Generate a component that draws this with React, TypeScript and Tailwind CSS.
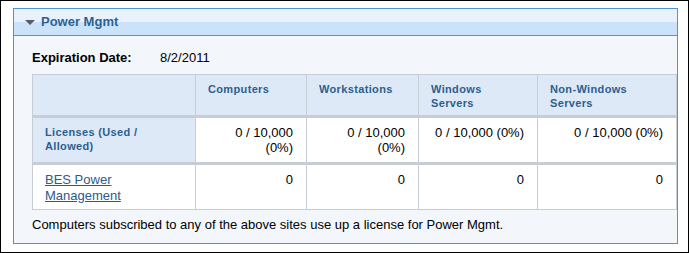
import React from "react";

const COLUMNS = [
  { key: "computers", label: ["Computers"], used: "0 / 10,000 (0%)", count: 0 },
  { key: "workstations", label: ["Workstations"], used: "0 / 10,000 (0%)", count: 0 },
  { key: "winServers", label: ["Windows", "Servers"], used: "0 / 10,000 (0%)", count: 0 },
  { key: "otherServers", label: ["Non-Windows", "Servers"], used: "0 / 10,000 (0%)", count: 0 },
];

const headCell =
  "align-top bg-[#dee9f7] border-r border-b-[3px] border-t border-[#c6cdd4] px-3 pt-[7px] text-[11px] leading-[14px] font-bold tracking-[0.35px] text-[#2c5f8f]";
const numCell =
  "align-top bg-white border-r border-[#c6cdd4] pl-3 pr-[13px] pt-[7px] text-right text-[13px] leading-[15px] text-black";

export default function App() {
  return (
    <div
      className="w-[689px] h-[253px] border border-black bg-white pl-3 pt-[7px]"
      style={{ fontFamily: '"Liberation Sans", Arial, sans-serif' }}
    >
      {/* Collapsible section: Power Mgmt */}
      <div className="w-[665px] border border-[#4b95d6] bg-[#f3f7fc]">
        <div className="flex h-[27px] items-center border-b border-[#4b95d6] bg-[linear-gradient(to_bottom,#e9f2fc_50%,#cbe2fb_50%)] pl-[11px]">
          <svg width="10" height="5" viewBox="0 0 10 5" className="mr-[6px]">
            <path d="M0 0 H10 L5 5 Z" fill="#595c60" />
          </svg>
          <span className="text-[13px] font-bold text-[#2b6296]">Power Mgmt</span>
        </div>

        <div className="pl-[18px] pt-[14px] pb-[10px]">
          <div className="flex text-[13px] leading-[16px] text-black">
            <span className="w-[128px] font-bold">Expiration Date:</span>
            <span>8/2/2011</span>
          </div>

          <table className="mt-2 w-[645px] table-fixed border-separate border-spacing-0">
            <colgroup>
              <col className="w-[164px]" />
              <col className="w-[111px]" />
              <col className="w-[112px]" />
              <col className="w-[119px]" />
              <col className="w-[139px]" />
            </colgroup>
            <thead>
              <tr className="h-[44px]">
                <th className={headCell + " border-l"}></th>
                {COLUMNS.map((c) => (
                  <th key={c.key} className={headCell + " text-left"}>
                    {c.label.map((line) => (
                      <div key={line}>{line}</div>
                    ))}
                  </th>
                ))}
              </tr>
            </thead>
            <tbody>
              <tr className="h-[47px]">
                <td className="align-top bg-[#dee9f7] border-l border-r border-b-[3px] border-[#c6cdd4] pl-3 pt-[7px] text-[11px] leading-[14px] font-bold tracking-[0.35px] text-[#2c5f8f]">
                  Licenses (Used /<br />
                  Allowed)
                </td>
                {COLUMNS.map((c) => (
                  <td key={c.key} className={numCell + " border-b-[3px]"}>
                    {c.used}
                  </td>
                ))}
              </tr>
              <tr className="h-[45px]">
                <td className="align-top bg-white border-l border-r border-b border-[#c6cdd4] pl-3 pt-[7px] text-[13px] leading-[16px]">
                  <a href="#" className="text-[#2d5b8b] underline">
                    BES Power
                    <br />
                    Management
                  </a>
                </td>
                {COLUMNS.map((c) => (
                  <td key={c.key} className={numCell + " border-b"}>
                    {c.count}
                  </td>
                ))}
              </tr>
            </tbody>
          </table>

          <p className="mt-[7px] text-[13px] leading-[16px] text-black">
            Computers subscribed to any of the above sites use up a license for Power Mgmt.
          </p>
        </div>
      </div>
    </div>
  );
}
